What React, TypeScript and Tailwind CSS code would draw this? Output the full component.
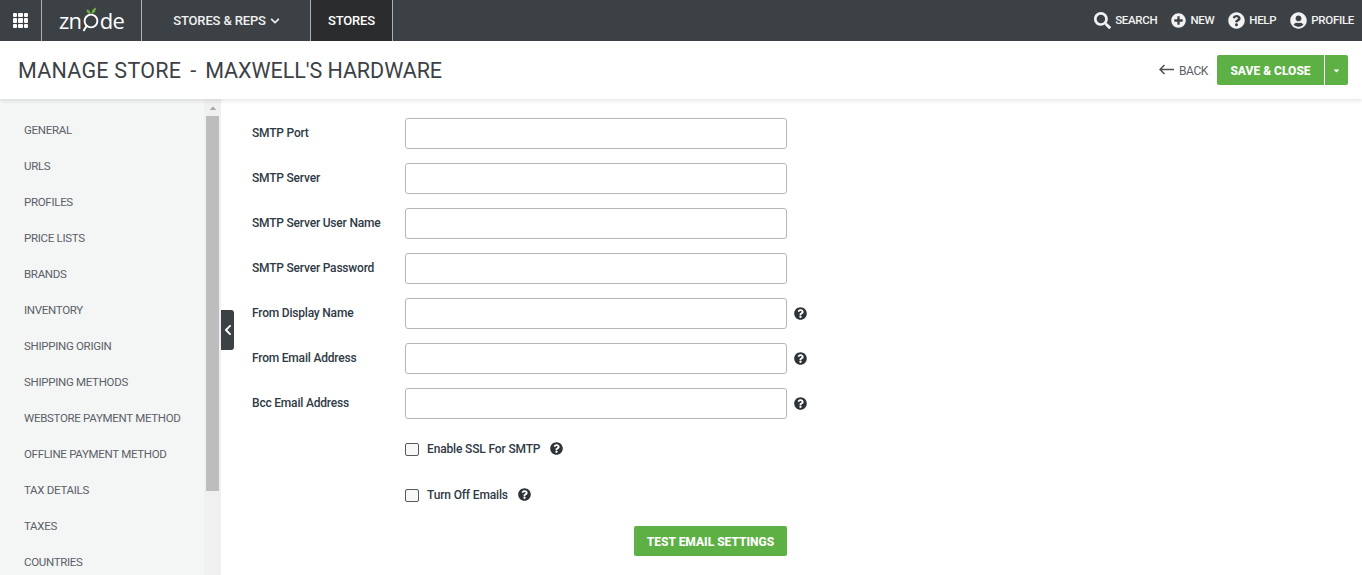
import { FaQuestionCircle, FaPlusCircle, FaUserCircle, FaSearch, FaCaretDown, FaCaretUp, FaChevronLeft, FaChevronDown } from "react-icons/fa";

const nav = ["GENERAL","URLS","PROFILES","PRICE LISTS","BRANDS","INVENTORY","SHIPPING ORIGIN","SHIPPING METHODS","WEBSTORE PAYMENT METHOD","OFFLINE PAYMENT METHOD","TAX DETAILS","TAXES","COUNTRIES"];
const rows = [
  { label: "SMTP Port", help: false },
  { label: "SMTP Server", help: false },
  { label: "SMTP Server User Name", help: false },
  { label: "SMTP Server Password", help: false },
  { label: "From Display Name", help: true },
  { label: "From Email Address", help: true },
  { label: "Bcc Email Address", help: true },
];

function Grid() {
  return (
    <div className="grid grid-cols-3 gap-[1px] w-[15px] h-[15px]">
      {Array.from({ length: 9 }).map((_, i) => <span key={i} className="bg-white rounded-[1px]" />)}
    </div>
  );
}

function Logo() {
  return (
    <div className="flex items-center text-white text-[22px] leading-none font-normal tracking-[-0.8px] font-['Open_Sans',sans-serif] -mt-[1px]">
      <span>zn</span>
      <svg width="20" height="30" viewBox="0 0 20 30" className="-ml-[0.5px] -mr-[1px] mt-[1px]">
        <circle cx="10" cy="15" r="6.4" fill="none" stroke="#fff" strokeWidth="1.9" />
        <path d="M5.5 20 L2.5 25" stroke="#fff" strokeWidth="2" />
        <path d="M9.5 8 C6.5 8 5.5 5.5 5.5 3.5 C8 3.5 9.5 5.5 9.5 8Z" fill="#6cb33f" />
        <path d="M10.5 8 C10.5 4.5 12 2.5 15 1.5 C15 5 13.5 7 10.5 8Z" fill="#6cb33f" />
      </svg>
      <span>de</span>
    </div>
  );
}

function TopLink({ icon, label }: { icon: React.ReactNode; label: string }) {
  return (
    <div className="flex items-center gap-[4px] text-[#f2f2f2]">
      {icon}
      <span className="text-[11.5px] font-medium tracking-[-0.3px] pt-[1px]">{label}</span>
    </div>
  );
}

function Help({ className = "" }: { className?: string }) {
  return <FaQuestionCircle className={`text-[#2e3338] w-[13px] h-[13px] -mt-[1px] ${className}`} />;
}

export default function App() {
  return (
    <div className="w-[1362px] h-[575px] overflow-hidden bg-white flex flex-col font-['Roboto',sans-serif]">
      <header className="h-[41px] shrink-0 bg-[#3c4146] flex items-stretch text-white">
        <div className="w-[42px] flex items-center justify-center border-r border-[#aeb2b5]"><Grid /></div>
        <div className="w-[100px] flex items-center justify-center border-r border-[#aeb2b5]"><Logo /></div>
        <div className="w-[169px] flex items-center justify-center gap-[4px] border-r border-[#aeb2b5] text-[13px] font-medium text-[#f1f1f1] tracking-[-0.15px] pt-[1px] pl-[1px]">
          <span>STORES &amp; REPS</span>
          <FaChevronDown className="w-[10px] h-[10px]" />
        </div>
        <div className="w-[82px] flex items-center justify-center border-r border-[#aeb2b5] bg-[#2b2c2e] text-[13px] font-medium tracking-[-0.2px] pt-[1px]">STORES</div>
        <div className="ml-auto flex items-center gap-[14px] pr-[8px]">
          <TopLink icon={<FaSearch className="w-[17px] h-[17px]" />} label="SEARCH" />
          <TopLink icon={<FaPlusCircle className="w-[15px] h-[15px]" />} label="NEW" />
          <TopLink icon={<FaQuestionCircle className="w-[17px] h-[17px]" />} label="HELP" />
          <TopLink icon={<FaUserCircle className="w-[17px] h-[17px]" />} label="PROFILE" />
        </div>
      </header>

      <div className="relative z-10 h-[58px] shrink-0 bg-white shadow-[0_2px_4px_rgba(0,0,0,0.1)] flex items-center justify-between pl-[18px] pr-[14px]">
        <h1 className="text-[21.5px] text-[#3c4146] font-normal whitespace-pre pt-[2px]"><span className="tracking-[0.25px]">MANAGE STORE</span><span className="mx-[9px]">-</span><span className="tracking-[-0.05px]">MAXWELL'S HARDWARE</span></h1>
        <div className="flex items-center">
          <svg width="15" height="11" viewBox="0 0 15 11" className="mr-[5px] mb-[2px]" fill="none" stroke="#4a4f54" strokeWidth="1.5">
            <path d="M15 5.5H1M5.5 1L1 5.5L5.5 10" />
          </svg>
          <span className="text-[12px] text-[#5b6066] mr-[9px] tracking-[-0.4px] pt-[1px]">BACK</span>
          <div className="w-[107px] h-[30px] bg-[#5db043] rounded-l-[2px] flex items-center justify-center text-white text-[12px] font-extrabold pt-[1px]">SAVE &amp; CLOSE</div>
          <div className="w-[23px] h-[30px] ml-[1px] bg-[#5db043] rounded-r-[2px] flex items-center justify-center text-white"><FaCaretDown className="w-[9px] h-[9px]" /></div>
        </div>
      </div>

      <div className="flex flex-1 min-h-0">
        <aside className="w-[221px] shrink-0 bg-[#f4f6f6] flex overflow-hidden">
          <nav className="w-[204px] shrink-0 pt-[14px]">
            {nav.map((n) => (
              <div key={n} className="h-[36px] flex items-center pl-[24px] text-[11.5px] tracking-[-0.3px] text-[#5b6066] whitespace-nowrap">{n}</div>
            ))}
          </nav>
          <div className="w-[17px] shrink-0 bg-[#f0f0f0] flex flex-col items-center">
            <div className="h-[17px] w-full flex items-center justify-center"><FaCaretUp className="w-[10px] h-[10px] text-[#a8a8a8]" /></div>
            <div className="h-[375px] w-[13px] bg-[#bdbdbd]" />
          </div>
        </aside>

        <main className="relative flex-1 pl-[31px] pt-[19px] text-[12px] text-[#2f3a45]">
          <div className="absolute left-0 top-[211px] w-[13px] h-[40px] bg-[#3c4146] rounded-r-[3px] flex items-center justify-center text-white">
            <FaChevronLeft className="w-[10px] h-[12px]" />
          </div>
          {rows.map((r) => (
            <div key={r.label} className="flex items-center h-[31px] mb-[14px]">
              <label className="w-[153px] font-medium text-[#2f3a45] tracking-[-0.2px] pb-[1px]">{r.label}</label>
              <input className="w-[382px] h-[31px] border border-[#b4b6b8] rounded-[3px] bg-white" />
              {r.help && <Help className="ml-[7px]" />}
            </div>
          ))}
          <div className="pl-[153px]">
            <div className="flex items-center h-[16px] mt-[22px]">
              <span className="w-[14px] h-[13px] border border-[#55595d] rounded-[2px] bg-[#f8f8f8] mr-[8px]" />
              <span className="font-medium tracking-[-0.15px]">Enable SSL For SMTP</span>
              <Help className="ml-[10px]" />
            </div>
            <div className="flex items-center h-[16px] mt-[30px]">
              <span className="w-[14px] h-[13px] border border-[#55595d] rounded-[2px] bg-[#f8f8f8] mr-[8px]" />
              <span className="font-medium tracking-[-0.15px]">Turn Off Emails</span>
              <Help className="ml-[10px]" />
            </div>
            <div className="w-[382px] flex justify-end mt-[23px]">
              <div className="w-[153px] h-[30px] bg-[#5db043] rounded-[2px] flex items-center justify-center text-white text-[12px] font-extrabold pt-[1px]">TEST EMAIL SETTINGS</div>
            </div>
          </div>
        </main>
      </div>
    </div>
  );
}
